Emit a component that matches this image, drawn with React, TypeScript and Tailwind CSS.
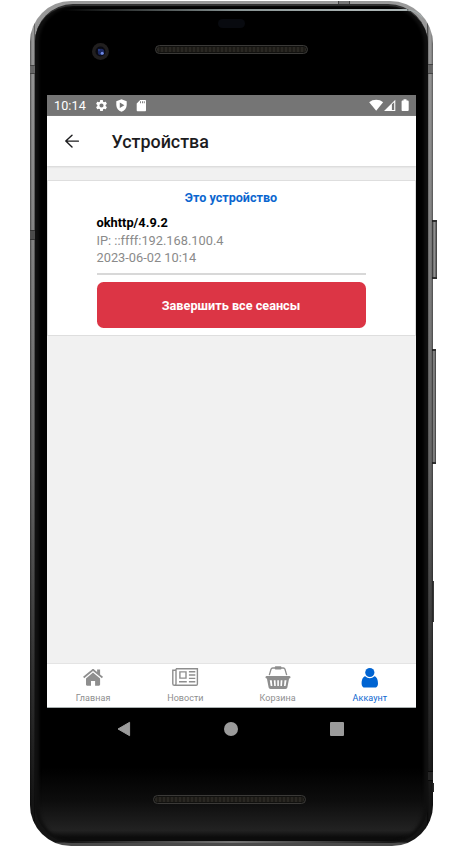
import React from "react";

function StatusBar() {
  return (
    <div className="flex h-[21px] shrink-0 items-center bg-[#757575] pl-[7px] text-white">
      <span className="w-[41px] text-[12.6px] leading-[21px] tracking-[0.1px]">10:14</span>
      <svg className="h-[21px] w-[58px] shrink-0" viewBox="95 95 58 21" fill="#fff">
        <g transform="translate(94.6 98.6) scale(0.575)">
          <path d="M19.14 12.94c.04-.3.06-.61.06-.94 0-.32-.02-.64-.07-.94l2.03-1.58a.49.49 0 0 0 .12-.61l-1.92-3.32a.49.49 0 0 0-.59-.22l-2.39.96c-.5-.38-1.03-.7-1.62-.94l-.36-2.54a.48.48 0 0 0-.48-.41h-3.84c-.24 0-.43.17-.47.41l-.36 2.54c-.59.24-1.13.57-1.62.94l-2.39-.96a.48.48 0 0 0-.59.22L2.74 8.87c-.12.21-.08.47.12.61l2.03 1.58c-.05.3-.09.63-.09.94s.02.64.07.94l-2.03 1.58a.49.49 0 0 0-.12.61l1.92 3.32c.12.22.37.29.59.22l2.39-.96c.5.38 1.03.7 1.62.94l.36 2.54c.05.24.24.41.48.41h3.84c.24 0 .44-.17.47-.41l.36-2.54c.59-.24 1.13-.56 1.62-.94l2.39.96c.22.08.47 0 .59-.22l1.92-3.32a.48.48 0 0 0-.12-.61l-2.01-1.58zM12 15.6A3.6 3.6 0 1 1 12 8.4a3.6 3.6 0 0 1 0 7.2z" />
        </g>
        <path fillRule="evenodd" d="M121.5 99.3 126.7 101.3V105C126.7 108.2 124.6 110.7 121.5 111.8 118.4 110.7 116.3 108.2 116.3 105V101.3ZM119.8 102.5V108L124.4 105.2Z" />
        <path fillRule="evenodd" d="M140.2 100H145C145.6 100 146 100.4 146 101V110.2C146 110.8 145.6 111.2 145 111.2H137.8C137.2 111.2 136.7 110.8 136.7 110.2V103.4ZM140.1 101.3V103.3H141V101.3ZM142 101.3V103.3H142.9V101.3ZM143.8 101.3V103.3H144.7V101.3Z" />
      </svg>
      <svg className="ml-auto h-[21px] w-[48px]" viewBox="368 95 48 21" fill="#fff">
        <path d="M369.2 102.2C373 98.9 379.4 98.9 383.1 102.2L376.2 110.8Z" />
        <path fillRule="evenodd" d="M395.3 99.7V111H384ZM391.9 104.2V110H394.2V102.2Z" />
        <path d="M403.5 99.3H406.5V100.5H407.5C408.2 100.5 408.7 100.9 408.7 101.6V110C408.7 110.7 408.2 111.1 407.5 111.1H402.7C402 111.1 401.6 110.7 401.6 110V101.6C401.6 100.9 402 100.5 402.7 100.5H403.5Z" />
      </svg>
    </div>
  );
}

function Header() {
  return (
    <header className="flex h-[50px] shrink-0 items-center bg-white pl-[18px] shadow-[0_1px_2px_#d4d4d4]">
      <svg className="h-[14px] w-[14px]" viewBox="0 0 14 14" fill="none" stroke="#1c1c1e" strokeWidth="1.4" strokeLinecap="round" strokeLinejoin="round">
        <path d="M7 1.2.8 7.1 7 13.1M.9 7.1H13.4" />
      </svg>
      <h1 className="ml-[32.5px] pt-[2px] text-[17.9px] leading-6 font-medium text-[#1c1c1e]">Устройства</h1>
    </header>
  );
}

function DeviceCard() {
  return (
    <section className="mt-[14px] flex h-[156px] shrink-0 flex-col border border-[#dedede] bg-white pt-[8px] pr-[49.5px] pl-[48.5px]">
      <h2 className="text-center text-[12.6px] leading-[18px] font-bold text-[#0b66cf]">Это устройство</h2>
      <div className="mt-[7px] text-[12.8px] leading-[17.5px] text-[#8a8a8a]">
        <p className="font-bold text-black">okhttp/4.9.2</p>
        <p>IP: ::ffff:192.168.100.4</p>
        <p>2023-06-02 10:14</p>
      </div>
      <div className="mt-[6.5px] h-[2px] shrink-0 bg-[#d8d8d8]" />
      <button className="mt-[7px] h-[46px] shrink-0 rounded-[6.5px] bg-[#dc3545] pt-[2px] text-[12.7px] font-bold text-white">
        Завершить все сеансы
      </button>
    </section>
  );
}

function HomeIcon() {
  return (
    <svg className="h-[24px] w-[30px]" viewBox="78 666 30 24" fill="#8e8e8e">
      <path d="M93 672.4 100.1 678.4V684.6C100.1 685.3 99.6 685.8 99 685.8H95.1V681H91V685.8H87.1C86.4 685.8 86 685.3 86 684.6V678.4Z" />
      <path d="M92 669.4C92.6 668.9 93.5 668.9 94.1 669.4L97.1 671.9V669.6H100.1V674.4L103 676.8 101.9 678.2 93 670.9 84.2 678.2 83.1 676.8Z" />
    </svg>
  );
}

function NewsIcon() {
  return (
    <svg className="h-[24px] w-[30px]" viewBox="170 666 30 24" fill="none" stroke="#8e8e8e" strokeWidth="1.4">
      <path d="M176 668.7H197.4V684C197.4 684.8 196.9 685.3 196.2 685.3H174.4C173.4 685.3 172.8 684.7 172.8 683.7V670.3H176M176 668.7V683.7C176 684.7 175.4 685.3 174.4 685.3" />
      <path d="M179.9 671.9H186V678.1H179.9ZM179 681.8H186.8M188.9 671.7H195.3M188.9 675H195.3M188.9 678.4H195.3M188.9 681.8H195.3" />
    </svg>
  );
}

function BasketIcon() {
  return (
    <svg className="h-[24px] w-[30px]" viewBox="262.5 666 30 24">
      <path d="M268.8 675.1 270.5 669.3C270.8 668.4 271.2 668 272.2 668H282.8C283.8 668 284.2 668.4 284.5 669.3L286.2 675.1" fill="none" stroke="#8e8e8e" strokeWidth="1.3" />
      <rect x="274.3" y="666.3" width="6.6" height="3.3" rx=".8" fill="#8e8e8e" />
      <path fillRule="evenodd" fill="#8e8e8e" d="M266 676.1H289C290.4 676.1 290.4 678.5 289 678.5H288.6L286.9 687.3C286.7 688.4 286 689 285 689H270C269 689 268.3 688.4 268.1 687.3L266.4 678.5H266C264.6 678.5 264.6 676.1 266 676.1ZM269.3 680.3 270.2 686H271.9L271.3 680.3ZM273.3 680.3 273.7 686H275.3L275 680.3ZM276.8 680.3V686H278.4V680.3ZM280.2 680.3 279.9 686H281.5L281.9 680.3ZM284 680.3 283.5 686H285.1L286 680.3Z" />
    </svg>
  );
}

function UserIcon() {
  return (
    <svg className="h-[24px] w-[30px]" viewBox="355 666 30 24" fill="#0064d2">
      <circle cx="369.8" cy="672.5" r="4.6" />
      <path d="M365.2 676.3C367.8 678.8 371.8 678.8 374.4 676.3 377 676.8 378 680.2 378 683.7 378 686.1 376.8 687.6 374.6 687.6H365C362.8 687.6 361.6 686.1 361.6 683.7 361.6 680.2 362.6 676.8 365.2 676.3Z" />
    </svg>
  );
}

const tabs = [
  { label: "Главная", icon: <HomeIcon />, active: false },
  { label: "Новости", icon: <NewsIcon />, active: false },
  { label: "Корзина", icon: <BasketIcon />, active: false },
  { label: "Аккаунт", icon: <UserIcon />, active: true },
];

function TabBar() {
  return (
    <nav className="mt-auto grid h-[45px] shrink-0 grid-cols-4 border-t border-b border-t-[#e4e4e4] border-b-[#a9b0b0] bg-white">
      {tabs.map((tab) => (
        <div key={tab.label} className={tab.active ? "flex flex-col items-center pt-[2px] text-[#0b66cf]" : "flex flex-col items-center pt-[2px] text-[#8e8e8e]"}>
          {tab.icon}
          <span className="mt-[2px] text-[9px] leading-[12px] tracking-[0.05px]">{tab.label}</span>
        </div>
      ))}
    </nav>
  );
}

function Speaker() {
  return (
    <div className="h-[9px] w-[153px] rounded-full border border-[#3b3a38] bg-[#11110f] p-[1px]">
      <div className="h-full rounded-full bg-[repeating-linear-gradient(90deg,#292722_0px,#292722_2px,#1d1b17_2px,#1d1b17_4px)]" />
    </div>
  );
}

function SideKey({ className }: { className: string }) {
  return (
    <div className={`absolute border-y-2 border-[#303030] bg-linear-to-r from-[#505050] via-[#909090] to-[#393939] ${className}`} />
  );
}

export default function App() {
  return (
    <div className="h-[864px] w-[467px] overflow-hidden bg-white pt-px pl-[30px] font-['Roboto','Noto_Sans',sans-serif]">
      <div className="relative h-[845px] w-[403px] rounded-[41px_43px_41px_41px] bg-[linear-gradient(180deg,#9a9a9a_0%,#858585_25%,#666_55%,#303030_80%,#141414_95%,#141414_99.5%,#4a4a4a_99.7%)]">
        <SideKey className="top-[219px] left-[402px] h-[59px] w-[5px]" />
        <SideKey className="top-[348px] left-[402px] h-[115px] w-[4px]" />
        <div className="absolute top-[580px] left-[402px] h-[41px] w-[2px] bg-[#393939]" />
        <div className="absolute top-[782px] left-[402px] h-[9px] w-[2px] bg-[#292929]" />
        <div className="absolute inset-0 rounded-[41px_43px_41px_41px] bg-[linear-gradient(90deg,#0007_0px,transparent_2px,transparent_4px,#000a_5px,transparent_5px,transparent_397px,#000a_397px,transparent_399px,transparent_401px,#0006_403px)]" />
        <div className="absolute top-[64px] left-0 h-[9px] w-[5px] border-y border-[#444] bg-[#666]" />
        <div className="absolute top-[229px] left-0 h-[10px] w-[5px] border-y border-[#333] bg-[#4c4c4c]" />
        <div className="absolute top-[63px] left-[397px] h-[10px] w-[6px] border-y border-[#444] bg-[#666]" />
        <div className="absolute top-[770px] left-[397px] h-[10px] w-[6px] border-y border-[#0a0a0a] bg-[#252525]" />
        <div className="absolute top-0 left-[308px] h-[5px] w-[12px] border-x border-[#444] bg-[#777]" />
        <div className="relative h-full px-[5px] pt-[3px] pb-[3px]">
          <div className="relative flex h-full flex-col rounded-[38px_40px_38px_38px] border-t-2 border-t-[#303030] bg-[linear-gradient(180deg,#000_0%,#000_91%,#0d0d0d_95%,#222_98.5%,#0c0c0c_99.3%)] px-[12px] shadow-[inset_4px_0_3px_#101010,inset_-4px_0_3px_#101010]">
            <div className="absolute top-[3px] left-[28px] h-[2px] w-[344px] bg-linear-to-r from-transparent via-[#879292] to-[#aab3b3] to-85%" />
            <svg className="absolute top-[2px] left-[371px] h-[13px] w-[18px]" viewBox="0 0 18 13" fill="none" stroke="#a4adad" strokeWidth="1.2" strokeLinecap="round">
              <path d="M0 2C7 2 12 4 16 9" />
            </svg>
            <div className="absolute bottom-0 left-[22px] h-[2px] w-[350px] bg-linear-to-r from-transparent via-[#777] to-transparent" />
            <div className="relative flex h-[89px] shrink-0">
              <div className="absolute top-[13px] left-[171px] h-[9px] w-[27px] rounded-full bg-[#080a0f]" />
              <div className="mt-[37px] ml-[44.5px] flex h-[17px] w-[17px] items-center justify-center rounded-full bg-[#211f1f]">
                <svg className="h-[11px] w-[11px]" viewBox="0 0 11 11">
                  <circle cx="5.5" cy="5.5" r="5" fill="#0a0a12" />
                  <circle cx="6" cy="6" r="3.2" fill="#1b2860" />
                  <circle cx="4" cy="4" r="1.2" fill="#263b83" />
                  <circle cx="7.2" cy="7.2" r="1.5" fill="#718be5" />
                </svg>
              </div>
              <div className="mt-[39px] ml-[46.5px]">
                <Speaker />
              </div>
            </div>
            <main className="flex h-[613px] w-[369px] shrink-0 flex-col overflow-hidden bg-[#f1f1f1]">
              <StatusBar />
              <Header />
              <DeviceCard />
              <TabBar />
            </main>
            <div className="flex h-[42px] shrink-0 items-center">
              <svg className="ml-[69.5px] h-[16px] w-[14px]" viewBox="0 0 14 16">
                <path d="M12.6 1.3V14.7L1 8Z" fill="#9b9b9b" stroke="#9b9b9b" strokeLinejoin="round" />
              </svg>
              <div className="ml-[93.5px] h-[13.5px] w-[13.5px] rounded-full bg-[#9b9b9b]" />
              <div className="ml-[92.5px] h-[13.5px] w-[13.5px] rounded-[1px] bg-[#9b9b9b]" />
            </div>
            <div className="mt-[45px] ml-[106px]">
              <Speaker />
            </div>
          </div>
        </div>
      </div>
    </div>
  );
}
